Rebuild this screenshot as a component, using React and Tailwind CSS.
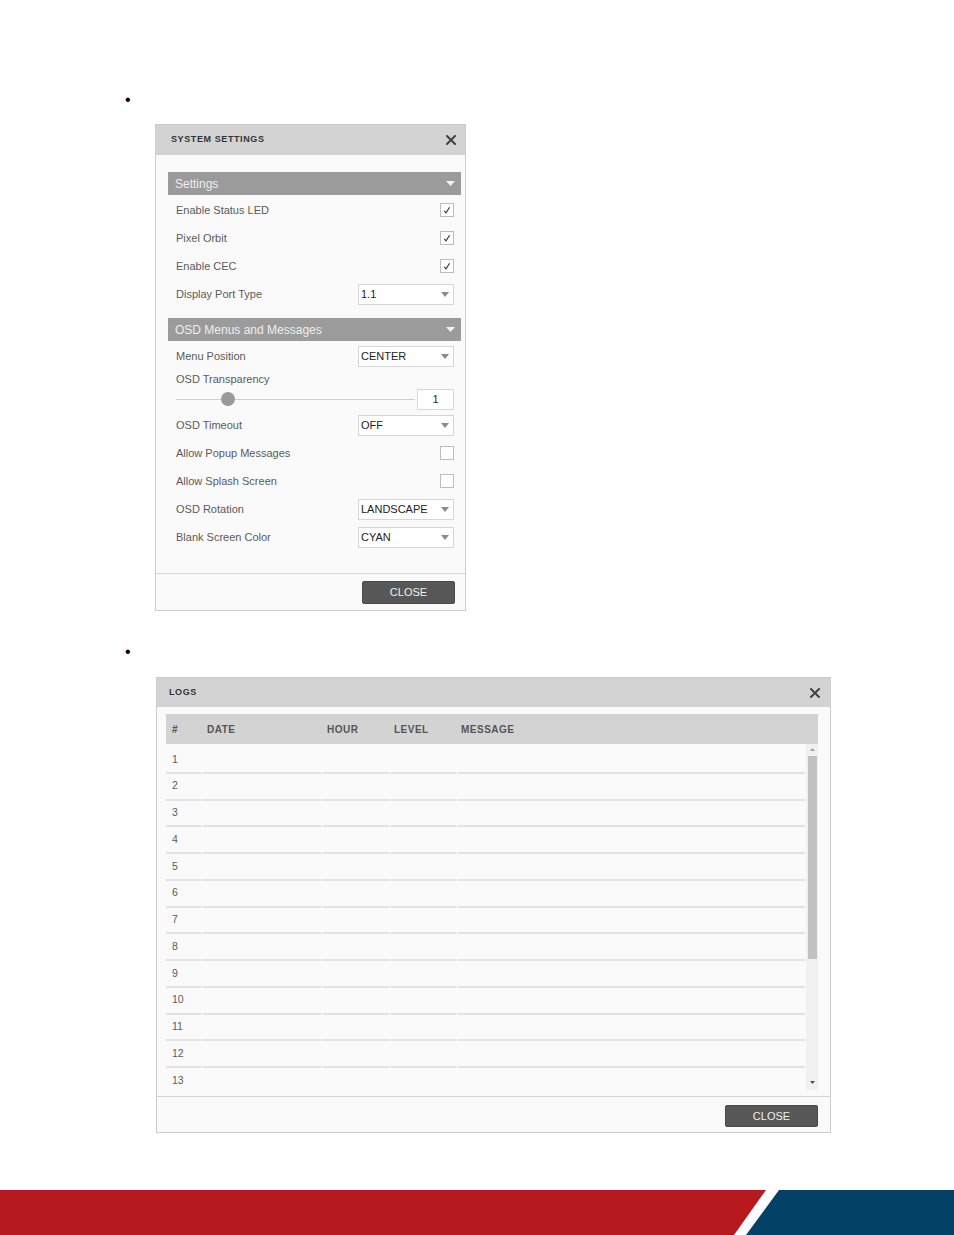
import React from "react";

const FONT = { fontFamily: '"Liberation Sans", Arial, sans-serif' };

function XIcon() {
  return (
    <svg width="10" height="10" viewBox="0 0 10 10" className="block">
      <path d="M1 1 L9 9 M9 1 L1 9" stroke="#444" strokeWidth="2" strokeLinecap="square" />
    </svg>
  );
}

function Check() {
  return (
    <svg width="12" height="12" viewBox="0 0 12 12" className="block">
      <path d="M3.2 6.8 L5 8.8 L8.6 3.2" stroke="#333" strokeWidth="1.1" fill="none" />
    </svg>
  );
}

function Checkbox({ checked }) {
  return (
    <div className="w-[14px] h-[14px] border border-[#bdbdbd] bg-white flex items-center justify-center">
      {checked ? <Check /> : null}
    </div>
  );
}

function Caret({ color = "#8a8a8a", w = 8, h = 5 }) {
  return (
    <svg width={w} height={h} viewBox={`0 0 ${w} ${h}`} className="block">
      <path d={`M0 0 L${w} 0 L${w / 2} ${h} Z`} fill={color} />
    </svg>
  );
}

function Select({ value }) {
  return (
    <div className="w-[96px] h-[21px] border border-[#d6d6d6] bg-white flex items-center justify-between pl-[2px] pr-[4px]">
      <span className="text-[11px] text-[#222]">{value}</span>
      <Caret />
    </div>
  );
}

function SectionHeader({ title }) {
  return (
    <div className="h-[23px] bg-[#9b9b9b] flex items-center justify-between pl-[7px] pr-[6px]">
      <span className="text-[12px] text-[#eeeeee]">{title}</span>
      <Caret color="#f2f2f2" w={9} h={5} />
    </div>
  );
}

function Row({ label, children }) {
  return (
    <div className="h-[28px] flex items-center justify-between pl-[8px] pr-[7px]">
      <span className="text-[11px] text-[#5a5a5a]">{label}</span>
      {children}
    </div>
  );
}

function CloseButton({ w }) {
  return (
    <div
      className={`${w} h-full rounded-[2px] bg-[#575757] border border-[#4a4a4a] flex items-center justify-center text-[11px] text-[#f0f0f0]`}
    >
      CLOSE
    </div>
  );
}

function SettingsDialog() {
  return (
    <div className="ml-[155px] w-[311px] border border-[#cccccc] bg-[#fafafa]">
      <div className="h-[30px] bg-[#d3d3d3] flex items-center justify-between pl-[15px] pr-[9px]">
        <span className="text-[9px] font-bold tracking-[0.6px] text-[#333333]">SYSTEM SETTINGS</span>
        <XIcon />
      </div>
      <div className="pt-[17px] pb-[22px] pl-[12px] pr-[4px]">
        <SectionHeader title="Settings" />
        <div className="mt-[1px]">
          <Row label="Enable Status LED"><Checkbox checked /></Row>
          <Row label="Pixel Orbit"><Checkbox checked /></Row>
          <Row label="Enable CEC"><Checkbox checked /></Row>
          <Row label="Display Port Type"><Select value="1.1" /></Row>
        </div>
        <div className="mt-[10px]">
          <SectionHeader title="OSD Menus and Messages" />
        </div>
        <div className="mt-[1px]">
          <Row label="Menu Position"><Select value="CENTER" /></Row>
          <div className="h-[18px] flex items-center pl-[8px]">
            <span className="text-[11px] text-[#5a5a5a]">OSD Transparency</span>
          </div>
          <div className="h-[22px] flex items-center pl-[8px] pr-[7px]">
            <div className="flex-1 relative h-[14px] flex items-center">
              <div className="w-full h-px bg-[#cfcfcf]" />
              <div className="absolute left-[45px] top-0 w-[14px] h-[14px] rounded-full bg-[#9a9a9a]" />
            </div>
            <div className="ml-[2px] w-[37px] h-[21px] border border-[#d6d6d6] bg-white flex items-center justify-center text-[11px] text-[#222]">
              1
            </div>
          </div>
          <div className="mt-[1px]">
            <Row label="OSD Timeout"><Select value="OFF" /></Row>
            <Row label="Allow Popup Messages"><Checkbox /></Row>
            <Row label="Allow Splash Screen"><Checkbox /></Row>
            <Row label="OSD Rotation"><Select value="LANDSCAPE" /></Row>
            <Row label="Blank Screen Color"><Select value="CYAN" /></Row>
          </div>
        </div>
      </div>
      <div className="border-t border-[#d6d6d6] pt-[7px] pb-[6px] pr-[10px] flex justify-end">
        <div className="h-[23px]">
          <CloseButton w="w-[93px]" />
        </div>
      </div>
    </div>
  );
}

const COLS = ["w-[36px]", "w-[119px]", "w-[66px]", "w-[66px]", "flex-1"];

function LogsDialog() {
  const rows = Array.from({ length: 13 }, (_, i) => i + 1);
  const headers = ["#", "DATE", "HOUR", "LEVEL", "MESSAGE"];
  return (
    <div className="ml-[156px] w-[675px] border border-[#cccccc] bg-[#fafafa]">
      <div className="h-[29px] bg-[#d3d3d3] flex items-center justify-between pl-[12px] pr-[10px]">
        <span className="text-[9px] font-bold tracking-[0.6px] text-[#333333]">LOGS</span>
        <XIcon />
      </div>
      <div className="pt-[7px] pb-[6px] pl-[9px] pr-[12px]">
        <div className="h-[30px] bg-[#d3d3d3] flex items-center">
          {headers.map((h, i) => (
            <div
              key={h}
              className={`${COLS[i]} ${i === 0 ? "pl-[6px]" : "pl-[4px]"} ${i < 4 ? "mr-[1px]" : ""} text-[10px] font-bold tracking-[0.5px] text-[#555555]`}
            >
              {h}
            </div>
          ))}
        </div>
        <div className="h-[346px] flex overflow-hidden">
          <div className="w-[639px] pt-[3px]">
            {rows.map((n) => (
              <div key={n} className="h-[26.75px] flex">
                {COLS.map((c, i) => (
                  <div
                    key={i}
                    className={`${c} ${i < 4 ? "mr-[1px]" : ""} border-b-2 border-[#e2e2e2] flex items-center ${i === 0 ? "pl-[6px]" : ""} text-[10.5px] text-[#5a5a5a]`}
                  >
                    {i === 0 ? n : null}
                  </div>
                ))}
              </div>
            ))}
          </div>
          <div className="ml-[1px] w-[12px] bg-[#f1f1f1] relative">
            <div className="absolute left-[4px] top-[4px]">
              <svg width="5" height="3" viewBox="0 0 5 3" className="block">
                <path d="M0 3 L5 3 L2.5 0 Z" fill="#a0a0a0" />
              </svg>
            </div>
            <div className="absolute left-[2px] top-[12px] w-[9px] h-[203px] bg-[#c1c1c1]" />
            <div className="absolute left-[4px] bottom-[6px]">
              <svg width="5" height="3" viewBox="0 0 5 3" className="block">
                <path d="M0 0 L5 0 L2.5 3 Z" fill="#505050" />
              </svg>
            </div>
          </div>
        </div>
      </div>
      <div className="border-t border-[#d6d6d6] pt-[8px] pb-[5px] pr-[12px] flex justify-end">
        <div className="h-[22px]">
          <CloseButton w="w-[93px]" />
        </div>
      </div>
    </div>
  );
}

function Bullet() {
  return (
    <div className="h-[20px] pl-[125px] flex items-center text-[16px] text-black leading-none">•</div>
  );
}

export default function App() {
  return (
    <div style={FONT} className="w-[954px] h-[1235px] bg-white flex flex-col pt-[90px] overflow-hidden">
      <Bullet />
      <div className="mt-[14px]">
        <SettingsDialog />
      </div>
      <div className="mt-[31px]">
        <Bullet />
      </div>
      <div className="mt-[15px]">
        <LogsDialog />
      </div>
      <div className="mt-auto h-[45px]">
        <svg width="954" height="45" viewBox="0 0 954 45" className="block">
          <polygon points="0,0 766,0 734,45 0,45" fill="#b8191f" />
          <polygon points="779,0 954,0 954,45 746,45" fill="#034166" />
        </svg>
      </div>
    </div>
  );
}
